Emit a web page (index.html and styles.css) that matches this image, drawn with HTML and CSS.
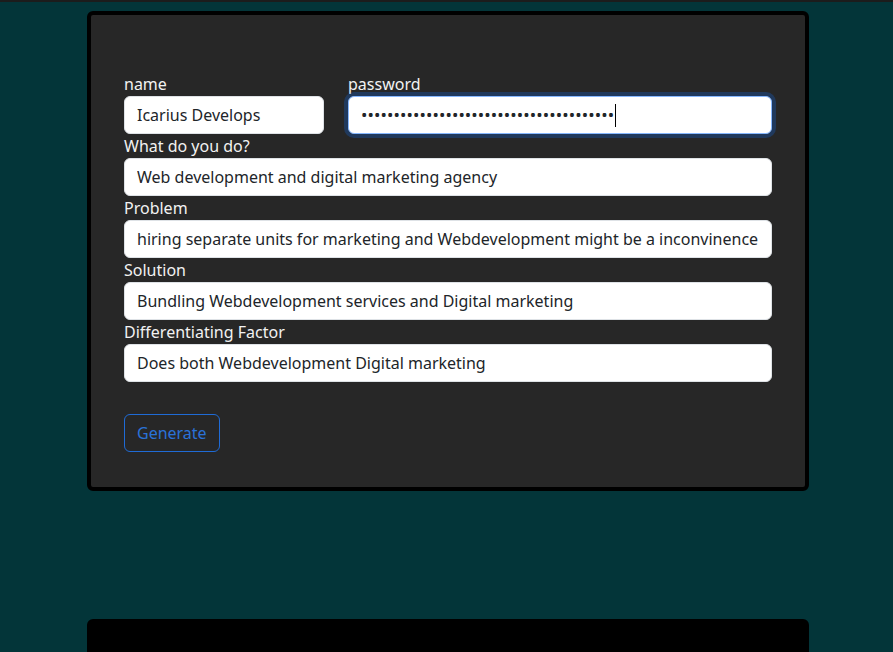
FILE: index.html
```html
<!DOCTYPE html>
<html lang="en">
<head>
<meta charset="utf-8">
<title>Generator</title>
<link rel="stylesheet" href="styles.css">
</head>
<body>
<div class="page">
  <div class="wrap">
    <form class="card">
      <div class="row">
        <div class="field field-name">
          <label class="label" for="name">name</label>
          <input class="control" id="name" type="text" value="Icarius Develops">
        </div>
        <div class="field field-pass">
          <label class="label" for="pass">password</label>
          <div class="control control-focus">
            <span class="dots">•••••••••••••••••••••••••••••••••••••••</span><span class="caret"></span>
          </div>
        </div>
      </div>
      <div class="field">
        <label class="label" for="what">What do you do?</label>
        <input class="control" id="what" type="text" value="Web development and digital marketing agency">
      </div>
      <div class="field">
        <label class="label" for="problem">Problem</label>
        <input class="control" id="problem" type="text" value="hiring separate units for marketing and Webdevelopment might be a inconvinence">
      </div>
      <div class="field">
        <label class="label" for="solution">Solution</label>
        <input class="control" id="solution" type="text" value="Bundling Webdevelopment services and Digital marketing">
      </div>
      <div class="field">
        <label class="label" for="diff">Differentiating Factor</label>
        <input class="control" id="diff" type="text" value="Does both Webdevelopment Digital marketing">
      </div>
      <div class="actions">
        <button class="btn" type="button">Generate</button>
      </div>
    </form>
    <div class="card card-output"></div>
  </div>
</div>
</body>
</html>
```
FILE: styles.css
```css
* { box-sizing: border-box; }

html, body {
  margin: 0;
  padding: 0;
}

body {
  background: #033539;
  font-family: "Noto Sans", "Open Sans", sans-serif;
  font-size: 16px;
  line-height: 24px;
  color: #f2f2f2;
  border-top: 2px solid #1c1c1c;
  min-height: 652px;
  overflow: hidden;
}

.page {
  display: flex;
  justify-content: center;
}

.wrap {
  width: 725px;
  padding-left: 3px;
  padding-top: 9px;
  display: flex;
  flex-direction: column;
  gap: 128px;
}

.card {
  width: 722px;
  background: #272727;
  border: 4px solid #000;
  border-radius: 6px;
  padding: 57px 33px 35px;
  display: flex;
  flex-direction: column;
  margin: 0;
}

.card-output {
  background: #000;
  height: 60px;
  padding: 0;
}

.row {
  display: flex;
  gap: 24px;
}

.field {
  display: flex;
  flex-direction: column;
}

.field-name { width: 200px; }
.field-pass { flex: 1; }

.label {
  display: block;
  height: 24px;
  line-height: 24px;
  color: #f2f2f2;
}

.control {
  display: block;
  width: 100%;
  height: 38px;
  padding: 6px 12px;
  font: inherit;
  line-height: 24px;
  color: #212529;
  background: #fff;
  border: 1px solid #dee2e6;
  border-radius: 6px;
  outline: none;
}

.control-focus {
  display: flex;
  align-items: center;
  border-color: #86b7fe;
  box-shadow: 0 0 0 4px rgba(13, 110, 253, 0.25);
}

.dots {
  font-size: 17px;
  letter-spacing: 0.1px;
  line-height: 24px;
  color: #212529;
}

.caret {
  display: inline-block;
  width: 1px;
  height: 23px;
  background: #000;
  margin-left: 1px;
}

.actions {
  margin-top: 32px;
}

.btn {
  font: inherit;
  line-height: 24px;
  height: 38px;
  padding: 6px 12px;
  color: #2a72d8;
  background: transparent;
  border: 1px solid #1f6bd6;
  border-radius: 6px;
  cursor: pointer;
}
```
